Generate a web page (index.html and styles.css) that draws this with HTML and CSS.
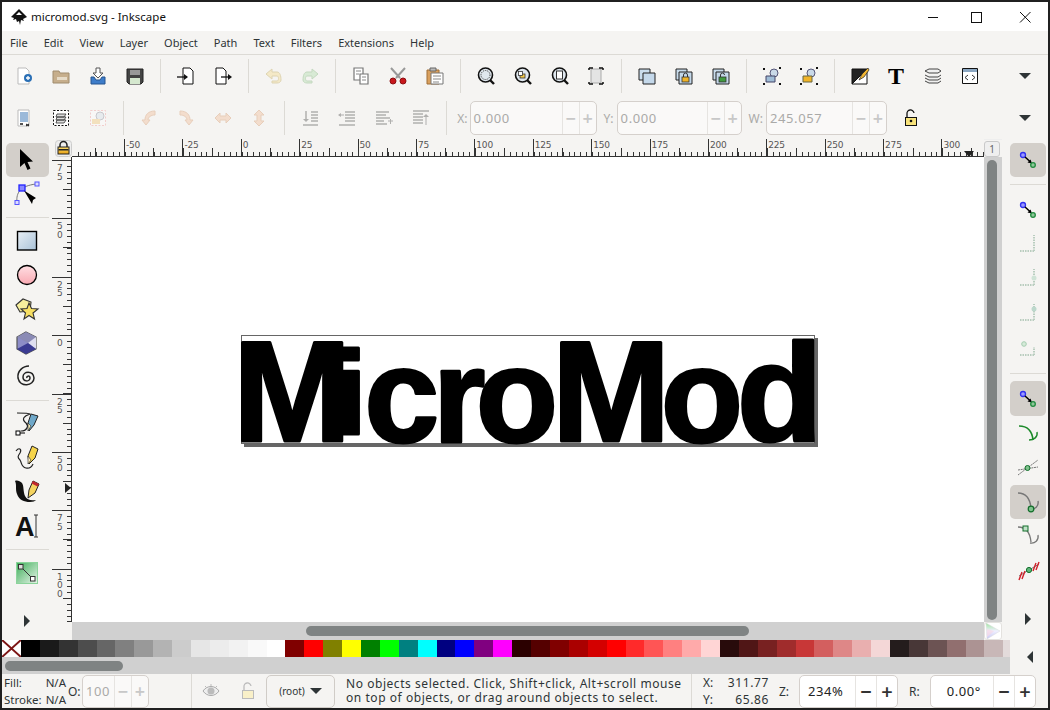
FILE: index.html
```html
<!DOCTYPE html>
<html>
<head>
  <title>micromod.svg - Inkscape</title>
  <link rel="stylesheet" href="styles.css">
</head>
<body>
<svg class="defs" width="0" height="0">
  <defs>
    <linearGradient id="gBlue" x1="0" y1="0" x2="1" y2="1"><stop offset="0" stop-color="#e8eff5"/><stop offset="1" stop-color="#a9c2d8"/></linearGradient>
    <linearGradient id="gPink" x1="0" y1="0" x2="0" y2="1"><stop offset="0" stop-color="#ffdfe3"/><stop offset="1" stop-color="#f9a9b2"/></linearGradient>
    <linearGradient id="gGreen" x1="0" y1="0" x2="1" y2="1"><stop offset="0" stop-color="#3fae5a"/><stop offset="1" stop-color="#e8f5ea"/></linearGradient>
    <linearGradient id="gGold" x1="0" y1="0" x2="0" y2="1"><stop offset="0" stop-color="#ffe070"/><stop offset="1" stop-color="#e8a010"/></linearGradient>
    <linearGradient id="gWheel" x1="0" y1="0" x2="0" y2="1"><stop offset="0" stop-color="#9fe59f"/><stop offset=".5" stop-color="#f0f0ff"/><stop offset="1" stop-color="#c8c8f5"/></linearGradient>
    <symbol id="mag" viewBox="0 0 20 20"><circle cx="9.500" cy="9" r="7" fill="#dfe7ee" stroke="#111" stroke-width="1.600"/><path d="M14 14l4 4" stroke="#111" stroke-width="2.400"/></symbol>
    <symbol id="nodeSnap" viewBox="0 0 26 26"><circle cx="8" cy="8" r="2.500" fill="#9a9aff" stroke="#3030f0" stroke-width="1.300"/><path d="M10 10l5 4.500" stroke="#000" stroke-width="1.500"/><path d="M17 16.500l-4.500-1 3-3z" fill="#000"/><circle cx="18" cy="18" r="2.300" fill="#8fc79a" stroke="#1e8a3c" stroke-width="1.300"/></symbol>
    <symbol id="cornerSnap" viewBox="0 0 26 26"><path d="M5 20h14M19 20V4" stroke="#b9cdbf" stroke-width="2" stroke-dasharray="1.500 1"/></symbol>
  </defs>
</svg>

<div class="window">
  <header class="titlebar">
    <svg class="app-logo" width="18" height="18" viewBox="0 0 18 18"><path d="M9 1L1 9l3 1-1 2 3-1 1 3 2-1 1 4 1-5 3 1-1-2 4-2z" fill="#111"/><path d="M6 7l3-3 3 3z" fill="#fff"/></svg>
    <span class="title-text">micromod.svg - Inkscape</span>
    <div class="win-btns">
      <svg width="46" height="29" viewBox="0 0 46 29"><path d="M18 15.500h10" stroke="#111"/></svg>
      <svg width="46" height="29" viewBox="0 0 46 29"><rect x="15.500" y="10.500" width="10" height="10" fill="none" stroke="#111"/></svg>
      <svg width="46" height="29" viewBox="0 0 46 29"><path d="M18 10l10.500 10.500M28.500 10L18 20.500" stroke="#111" fill="none"/></svg>
    </div>
  </header>

  <nav class="menubar">
    <span>File</span><span>Edit</span><span>View</span><span>Layer</span><span>Object</span><span>Path</span><span>Text</span><span>Filters</span><span>Extensions</span><span>Help</span>
  </nav>

  <div class="toolbar cmdbar">
    <button class="tb"><svg viewBox="0 0 20 20"><path d="M4 2h8l3 3v13H4z" fill="#fff" stroke="#bbb"/><circle cx="14" cy="12" r="4" fill="#2a6fb5"/><path d="M14 10v4M12 12h4" stroke="#fff" stroke-width="1.300"/></svg></button>
    <button class="tb"><svg viewBox="0 0 20 20"><path d="M2 5h6l1 2h9v10H2z" fill="#c6ae8c" stroke="#a08c6e"/><path d="M6 11h10v3H6z" fill="#e6dbc8"/></svg></button>
    <button class="tb"><svg viewBox="0 0 20 20"><path d="M8 2h4v5h3l-5 5-5-5h3z" fill="#fff" stroke="#555"/><path d="M3 11v7h14v-7h-3l-2 3H8l-2-3z" fill="#3d7cc9" stroke="#27558f"/></svg></button>
    <button class="tb"><svg viewBox="0 0 20 20"><path d="M2 3h16v13l-2 2H4l-2-2z" fill="#444" stroke="#222"/><path d="M5 4h10v5H5z" fill="#999"/><path d="M5 12h10v6H5z" fill="#d5e8cf"/></svg></button>
    <i class="sep"></i>
    <button class="tb"><svg viewBox="0 0 20 20"><path d="M7 2h7l3 3v13H7z" fill="#fff" stroke="#111"/><path d="M1 11h10" stroke="#111" stroke-width="1.300"/><path d="M12 11l-4-3v6z" fill="#111"/></svg></button>
    <button class="tb"><svg viewBox="0 0 20 20"><path d="M3 2h7l3 3v13H3z" fill="#fff" stroke="#111"/><path d="M8 11h9" stroke="#111" stroke-width="1.300"/><path d="M19 11l-4-3v6z" fill="#111"/></svg></button>
    <i class="sep"></i>
    <button class="tb off"><svg viewBox="0 0 20 20"><path d="M17 14c0 2-2 3-4 3H8v-2h5c2 0 2-5 0-5H8v3L2 8l6-5v3h5c3 0 4 4 4 8z" fill="#f3d67a" stroke="#b59a3d"/></svg></button>
    <button class="tb off"><svg viewBox="0 0 20 20"><path d="M3 14c0 2 2 3 4 3h5v-2H7c-2 0-2-5 0-5h5v3l6-5-6-5v3H7c-3 0-4 4-4 8z" fill="#a5d8a0" stroke="#6aa864"/></svg></button>
    <i class="sep"></i>
    <button class="tb"><svg viewBox="0 0 20 20"><path d="M3 2h9v12H3z" fill="#fff" stroke="#777" stroke-width="1.200"/><path d="M9 8h8v10H9z" fill="#fff" stroke="#777" stroke-width="1.200"/><path d="M5 5h5M5 8h3M11 11h4M11 14h4" stroke="#888"/></svg></button>
    <button class="tb"><svg viewBox="0 0 20 20"><path d="M3 2l9 10M17 2L8 12" stroke="#999" stroke-width="2"/><circle cx="5" cy="15" r="3" fill="#c8171c" stroke="#8d0f12"/><circle cx="15" cy="15" r="3" fill="#c8171c" stroke="#8d0f12"/></svg></button>
    <button class="tb"><svg viewBox="0 0 20 20"><path d="M2 4h12v14H2z" fill="#d9a05e" stroke="#a06f36"/><path d="M6 7h12v11H6z" fill="#fff" stroke="#777"/><path d="M5 2h6v3H5z" fill="#bbb" stroke="#666"/><path d="M8 10h8M8 13h8M8 16h6" stroke="#888"/></svg></button>
    <i class="sep"></i>
    <button class="tb"><svg viewBox="0 0 20 20"><use href="#mag"/><circle cx="9.500" cy="9" r="4.500" fill="none" stroke="#333" stroke-dasharray="1 1"/></svg></button>
    <button class="tb"><svg viewBox="0 0 20 20"><use href="#mag"/><rect x="7" y="8" width="5" height="4" fill="#f3c94a" stroke="#333" stroke-width=".800"/><rect x="5.500" y="5.500" width="4" height="4" fill="#fff" stroke="#333" stroke-width=".800"/></svg></button>
    <button class="tb"><svg viewBox="0 0 20 20"><use href="#mag"/><rect x="6.500" y="5" width="6" height="8" fill="#fff" stroke="#333"/></svg></button>
    <button class="tb"><svg viewBox="0 0 20 20"><path d="M5 3h10v14H5z" fill="#e4e4e4" stroke="#aaa"/><path d="M3 2h4M3 2v2M13 2h4M17 2v2M3 18h4M3 18v-2M13 18h4M17 18v-2" stroke="#111" stroke-width="1.500"/></svg></button>
    <i class="sep"></i>
    <button class="tb"><svg viewBox="0 0 20 20"><path d="M2 3h11v11H2z" fill="#c9dcec" stroke="#222"/><path d="M6 7h12v11H6z" fill="#c4d8ea" stroke="#222"/></svg></button>
    <button class="tb"><svg viewBox="0 0 20 20"><path d="M2 3h11v11H2z" fill="#c9dcec" stroke="#222"/><path d="M5 6h13v12H5z" fill="#c4d8ea" stroke="#222"/><rect x="8" y="11" width="7" height="5" fill="#f0b429" stroke="#333" stroke-width=".800"/><path d="M9.500 11V9a2 2 0 0 1 4 0v2" fill="none" stroke="#333"/></svg></button>
    <button class="tb"><svg viewBox="0 0 20 20"><path d="M2 3h11v11H2z" fill="#c9dcec" stroke="#222"/><path d="M5 6h13v12H5z" fill="#c4d8ea" stroke="#222"/><rect x="8" y="11" width="7" height="5" fill="#3f9a3f" stroke="#333" stroke-width=".800"/><path d="M9.500 11V9a2 2 0 0 1 4 0" fill="none" stroke="#333"/></svg></button>
    <i class="sep"></i>
    <button class="tb"><svg viewBox="0 0 20 20"><circle cx="12" cy="7" r="4" fill="#c9d9e8" stroke="#557"/><path d="M4 10h9v6H4z" fill="#9fbcd6" stroke="#446"/><path d="M1 2h2v2H1zM17 1h2v2h-2zM1 17h2v2H1zM17 17h2v2h-2z" fill="#111"/></svg></button>
    <button class="tb"><svg viewBox="0 0 20 20"><circle cx="12" cy="7" r="4" fill="#c9d9e8" stroke="#557"/><path d="M4 10h9v6H4z" fill="#f0b429" stroke="#664"/><path d="M1 2h2v2H1zM17 1h2v2h-2zM1 17h2v2H1zM17 17h2v2h-2z" fill="#111"/></svg></button>
    <i class="sep"></i>
    <button class="tb"><svg viewBox="0 0 20 20"><path d="M2 3h15L2 18z" fill="#222" stroke="#111"/><path d="M17 3v15H2z" fill="#fff" stroke="#111"/><path d="M18 2l-6 6-3 6 5-3 5-7z" fill="#f2b632" stroke="#222" stroke-width=".700"/></svg></button>
    <button class="tb"><svg class="open-svg" viewBox="0 0 20 20"><text class="serif-t" x="10" y="18">T</text></svg></button>
    <button class="tb"><svg viewBox="0 0 20 20"><path d="M2 5l4-2h9l3 2-3 2H6zM2 9l4 2h9l3-2M2 12l4 2h9l3-2M2 15l4 2h9l3-2" fill="#f0f0f0" stroke="#444"/></svg></button>
    <button class="tb"><svg viewBox="0 0 20 20"><path d="M2.500 2.500h15v15h-15z" fill="#fff" stroke="#111"/><path d="M3 3h14v3H3z" fill="#8aa6c1"/><path d="M8 9l-3 2.500L8 14M12 9l3 2.500L12 14" stroke="#333" fill="none"/></svg></button>
    <button class="more"><i class="tri-down"></i></button>
  </div>

  <div class="toolbar ctrlbar">
    <button class="tb"><svg viewBox="0 0 20 20"><path d="M4 2h11v16H4z" fill="#fff" stroke="#bbb"/><path d="M6 4h8v10H6z" fill="#9bb9d9"/><path d="M6 15h3v2H6z" fill="#555"/><path d="M12 16l3 2M15 16l-3 2" stroke="#111"/></svg></button>
    <button class="tb"><svg viewBox="0 0 20 20"><path d="M2.500 2.500h15v15h-15z" fill="#fff" stroke="#111" stroke-dasharray="2 1.500"/><path d="M6 6h9l-2 3H5zM6 9h9l-2 3H5zM6 12h9l-2 3H5z" fill="#ddd" stroke="#333" stroke-width=".800"/></svg></button>
    <button class="tb off"><svg viewBox="0 0 20 20"><path d="M2.500 2.500h15v15h-15z" fill="#fff" stroke="#e88" stroke-dasharray="2 1.500"/><circle cx="12" cy="8" r="4" fill="#cfdde8" stroke="#778"/><path d="M4 11h8v5H4z" fill="#f0c060"/></svg></button>
    <i class="sep"></i>
    <button class="tb off"><svg viewBox="0 0 20 20"><path d="M16 3C9 3 6 7 6 12H3l4 5 4-5H9c0-3 3-5 7-5z" fill="#f0b48a" stroke="#d08a58"/></svg></button>
    <button class="tb off"><svg viewBox="0 0 20 20"><path d="M4 3c7 0 10 4 10 9h3l-4 5-4-5h2c0-3-3-5-7-5z" fill="#f0b48a" stroke="#d08a58"/></svg></button>
    <button class="tb off"><svg viewBox="0 0 20 20"><path d="M2 10l5-5v3h6V5l5 5-5 5v-3H7v3z" fill="#f0b48a" stroke="#d08a58"/></svg></button>
    <button class="tb off"><svg viewBox="0 0 20 20"><path d="M10 2l5 5h-3v6h3l-5 5-5-5h3V7H5z" fill="#f0b48a" stroke="#d08a58"/></svg></button>
    <i class="sep"></i>
    <button class="tb off"><svg viewBox="0 0 20 20"><path d="M11 4h7M11 7h7M11 10h7M11 13h7M3 17h15" stroke="#333" stroke-width="1.500"/><path d="M6 3v9" stroke="#333" stroke-width="1.500"/><path d="M3 11h6l-3 3z" fill="#333"/></svg></button>
    <button class="tb off"><svg viewBox="0 0 20 20"><path d="M8 4h10M8 7h10M8 10h10M8 13h10M2 17h16" stroke="#333" stroke-width="1.500"/><path d="M2 7h5" stroke="#333"/><path d="M1 7l3-2v4z" fill="#333"/></svg></button>
    <button class="tb off"><svg viewBox="0 0 20 20"><path d="M2 4h13M2 7h10M2 10h14M2 13h8M2 16h11" stroke="#333" stroke-width="1.500"/><path d="M14 13h5M16.500 11v5" stroke="#333"/></svg></button>
    <button class="tb off"><svg viewBox="0 0 20 20"><path d="M2 3h16M2 6h10M2 9h10M2 12h10M2 15h10" stroke="#333" stroke-width="1.500"/><path d="M15 17V8" stroke="#333"/><path d="M15 6l-3 3h6z" fill="#333"/></svg></button>
    <i class="sep"></i>
    <label class="flabel off-text">X:</label>
    <div class="spin off-text xy"><span class="val">0.000</span><b>−</b><b>+</b></div>
    <label class="flabel off-text gap-y">Y:</label>
    <div class="spin off-text xy-y"><span class="val">0.000</span><b>−</b><b>+</b></div>
    <label class="flabel off-text gap-w">W:</label>
    <div class="spin off-text wd"><span class="val">245.057</span><b>−</b><b>+</b></div>
    <svg class="lock-open" width="16" height="20" viewBox="0 0 16 20"><rect x="2.500" y="9.500" width="11" height="8" fill="#f7e27a" stroke="#111"/><path d="M4 9V6a3.500 3.500 0 0 1 7 -1" fill="none" stroke="#111" stroke-width="1.300"/><circle cx="8" cy="13" r="1.300" fill="#111"/></svg>
    <button class="more"><i class="tri-down"></i></button>
  </div>

  <div class="workspace">
    <aside class="toolbox">
      <button class="tool active"><svg viewBox="0 0 26 26"><path d="M6 2v18l4.500-4 3 7 3-1.500-3-6.500 5.500-.5z" fill="#000"/></svg></button>
      <button class="tool"><svg viewBox="0 0 26 26"><path d="M3 21C2 12 6 5 22 3" fill="none" stroke="#777"/><rect x="1" y="19.500" width="4" height="4" fill="#ddf" stroke="#55f"/><rect x="21" y="1" width="4" height="4" fill="#ddf" stroke="#55f"/><rect x="5" y="4" width="6" height="6" fill="#88f" stroke="#22f" stroke-width="1.300"/><path d="M10 9.500L22 17l-3 2-1 4z" fill="#000"/></svg></button>
      <i class="tool-sep"></i>
      <button class="tool"><svg viewBox="0 0 26 26"><rect x="3.500" y="3.500" width="19" height="18.500" fill="url(#gBlue)" stroke="#000" stroke-width="1.400"/></svg></button>
      <button class="tool"><svg viewBox="0 0 26 26"><circle cx="13" cy="13" r="9.500" fill="url(#gPink)" stroke="#000" stroke-width="1.300"/></svg></button>
      <button class="tool"><svg viewBox="0 0 26 26"><path d="M2 9l7-6 8 3-1 9-10 1z" fill="#f7ef9c" stroke="#333" stroke-width="1.100"/><path d="M15 7l2.500 5.500 6.500.5-5 4 1.500 6-5.500-3.500-5 3.500 1.500-6-4.500-4 6-.5z" fill="#f7df62" stroke="#333" stroke-width="1.100"/></svg></button>
      <button class="tool"><svg viewBox="0 0 26 26"><path d="M12 2l10 5v12l-10 5-9-5V7z" fill="#8d8dc7" stroke="#555" stroke-width="1.200"/><path d="M12 2l10 5-8 6-11-6z" fill="#8b8bb5"/><path d="M14 13l8-6v12z" fill="#dfdff0"/><path d="M3 19l11-6 8 6-10 5z" fill="#3b3b92"/></svg></button>
      <button class="tool"><svg viewBox="0 0 26 26"><path d="M13 14c-1-2 3-3 3 0 0 4-7 4-7-1 0-6 10-7 11 1 0 8-14 10-16 0C3 7 9 2 15 2" fill="none" stroke="#222" stroke-width="1.500"/></svg></button>
      <i class="tool-sep"></i>
      <button class="tool"><svg viewBox="0 0 26 26"><path d="M3 2c6 0 12 0 13 1-6 2-9 5-4 9 3 3 1 8-5 8" fill="none" stroke="#222" stroke-width="1.200"/><rect x="2" y="20" width="4" height="4" fill="#fff" stroke="#000"/><path d="M6 22h5" stroke="#000"/><path d="M17 3l7 2-4 9-5 6-1-8z" fill="#6fa8c9" stroke="#222"/><path d="M14 12l3 3-3 5z" fill="#eee7b8" stroke="#222" stroke-width=".600"/></svg></button>
      <button class="tool"><svg viewBox="0 0 26 26"><path d="M2 6c3-4 6-2 4 2-2 3-3 4 0 7 2 3 1 7 6 8s6-2 7-4" fill="none" stroke="#222" stroke-width="1.200"/><path d="M18 1l6 3-3 9-6 6-1-8z" fill="#f6d44a" stroke="#222"/><path d="M14 11l3 4-3 4z" fill="#f7e9c2" stroke="#222" stroke-width=".600"/></svg></button>
      <button class="tool"><svg viewBox="0 0 26 26"><path d="M1 2c2 4 0 8 2 13 2 6 7 8 13 8 3 0 5-1 6-2-5 1-9 0-11-4-2-5-1-10-3-13-2-2-5-3-7-2z" fill="#111"/><path d="M19 2l6 3-4 9-7 5 1-8z" fill="#f4d360" stroke="#222"/><path d="M19 2l6 3-1.500 2.500-6-3z" fill="#c0272d"/></svg></button>
      <button class="tool"><svg class="open-svg" viewBox="0 0 26 26"><text class="tool-a" x="1" y="23">A</text><path d="M20 2h4M22 2v22M20 24h4" stroke="#333" fill="none"/></svg></button>
      <i class="tool-sep"></i>
      <button class="tool"><svg viewBox="0 0 26 26"><rect x="2.500" y="2.500" width="21" height="21" fill="url(#gGreen)" stroke="#8bd49b"/><path d="M7 7l12 12" stroke="#333"/><rect x="4.500" y="4.500" width="4.500" height="4.500" fill="#ddd" stroke="#333"/><rect x="16.500" y="16.500" width="4.500" height="4.500" fill="#fff" stroke="#333"/></svg></button>
      <button class="overflow-btn"><i class="tri-right"></i></button>
    </aside>

    <div class="stage">
      <div class="corner-lock">
        <svg width="17" height="17" viewBox="0 0 17 17"><rect x=".500" y=".500" width="16" height="16" rx="3" fill="#eee" stroke="#ccc"/><rect x="3" y="7" width="11" height="7" fill="url(#gGold)" stroke="#222"/><path d="M5 7V5a3.500 3.500 0 0 1 7 0v2" fill="none" stroke="#222" stroke-width="1.500"/><rect x="3.500" y="9" width="10" height="1.500" fill="#222"/></svg>
      </div>
      <div class="ruler-h">
        <span class="mark">-50</span><span class="mark">-25</span><span class="mark">0</span><span class="mark">25</span><span class="mark">50</span><span class="mark">75</span><span class="mark">100</span><span class="mark">125</span><span class="mark">150</span><span class="mark">175</span><span class="mark">200</span><span class="mark">225</span><span class="mark">250</span><span class="mark">275</span><span class="mark">300</span>
        <i class="pointer-h"></i>
      </div>
      <div class="zoom-corner"><span>1</span></div>

      <div class="ruler-v">
        <span class="vmark">7<br>5</span><span class="vmark">5<br>0</span><span class="vmark">2<br>5</span><span class="vmark">0</span><span class="vmark">2<br>5</span><span class="vmark">5<br>0</span><span class="vmark">7<br>5</span><span class="vmark">1<br>0<br>0</span>
        <i class="pointer-v"></i>
      </div>
      <main class="canvas">
        <div class="page"></div>
        <svg class="artwork" width="912" height="465" viewBox="72 157 912 465">
          <text class="logo" y="441"><tspan x="233">M</tspan><tspan class="logo-i" x="334" y="433.500">i</tspan><tspan class="logo-low" x="364.500" y="441.500">c</tspan><tspan class="logo-low" x="433">r</tspan><tspan class="logo-low" x="476">o</tspan><tspan x="552" y="441">M</tspan><tspan class="logo-low" x="661" y="441.500">o</tspan><tspan class="logo-d" x="737" y="441">d</tspan></text>
        </svg>
      </main>
      <div class="vscroll"><i></i></div>

      <div class="stage-foot"></div>
      <div class="hscroll"><i></i></div>
      <div class="wheel-corner"><svg width="16" height="16" viewBox="0 0 16 16"><path d="M1 0l14 8-13 8z" fill="url(#gWheel)" stroke="#ddd" stroke-width=".500"/><path d="M2 6l7 2-7 6z" fill="#f7d8e6" opacity=".7"/></svg></div>
    </div>

    <aside class="snapbar">
      <button class="snap active"><svg viewBox="0 0 26 26"><use href="#nodeSnap"/></svg></button>
      <i class="snap-sep"></i>
      <button class="snap"><svg viewBox="0 0 26 26"><use href="#nodeSnap"/></svg></button>
      <button class="snap"><svg viewBox="0 0 26 26"><use href="#cornerSnap"/></svg></button>
      <button class="snap"><svg viewBox="0 0 26 26"><use href="#cornerSnap"/><circle cx="19" cy="13" r="2.500" fill="#cfe3d6"/></svg></button>
      <button class="snap"><svg viewBox="0 0 26 26"><use href="#cornerSnap"/><circle cx="19" cy="9" r="2.500" fill="#bcd8cc"/></svg></button>
      <button class="snap"><svg viewBox="0 0 26 26"><path d="M5 21h14M19 21V13" stroke="#b9cdbf" stroke-width="2" stroke-dasharray="1.500 1"/><circle cx="9" cy="10" r="2.300" fill="#d5ead9" stroke="#a5cdb0"/></svg></button>
      <i class="snap-sep last"></i>
      <button class="snap active"><svg viewBox="0 0 26 26"><use href="#nodeSnap"/></svg></button>
      <button class="snap"><svg viewBox="0 0 26 26"><path d="M4 6c7 0 13 4 14 14" fill="none" stroke="#1c8a2a" stroke-width="1.600"/><path d="M22 12c1 5-3 8-8 8" fill="none" stroke="#1c8a2a" stroke-width="1.400"/></svg></button>
      <button class="snap"><svg viewBox="0 0 26 26"><path d="M3 21L23 6M3 16l20-3" stroke="#777" fill="none" stroke-dasharray="2 .700"/><circle cx="12.500" cy="14" r="2.500" fill="#7fc28d" stroke="#126e2a"/></svg></button>
      <button class="snap active"><svg viewBox="0 0 26 26"><path d="M3 4c7 0 12 5 13 15" fill="none" stroke="#777" stroke-width="1.400"/><path d="M23 12c1 5-3 9-8 8" fill="none" stroke="#777" stroke-width="1.400"/><circle cx="16" cy="20" r="2.800" fill="#7fc28d" stroke="#126e2a" stroke-width="1.200"/></svg></button>
      <button class="snap"><svg viewBox="0 0 26 26"><path d="M3 4c7 0 12 5 13 15" fill="none" stroke="#777" stroke-width="1.300"/><path d="M23 12c1 5-3 9-8 8" fill="none" stroke="#777" stroke-width="1.300"/><rect x="8" y="3" width="5" height="5" fill="#bfe0c7" stroke="#126e2a"/></svg></button>
      <button class="snap"><svg viewBox="0 0 26 26"><path d="M4 19l20-12" stroke="#777"/><path d="M4 23l3-8M7 22l3-8M18 14l3-8M21 13l3-8" stroke="#d0202a" stroke-width="1.400"/><circle cx="14" cy="13" r="2.600" fill="#5fb57a" stroke="#126e2a"/></svg></button>
      <button class="overflow-btn"><i class="tri-right"></i></button>
    </aside>
  </div>

  <div class="bottom">
    <div class="palette-col">
      <div class="palette">
        <svg class="no-paint" width="19" height="17" viewBox="0 0 19 17"><rect width="19" height="17" fill="#fff"/><path d="M0 0l19 17M19 0L0 17" stroke="#7d1616" stroke-width="2"/></svg>
        <i style="background:#000000"></i><i style="background:#1a1a1a"></i><i style="background:#333333"></i><i style="background:#4d4d4d"></i><i style="background:#666666"></i><i style="background:#808080"></i><i style="background:#999999"></i><i style="background:#b3b3b3"></i><i style="background:#cccccc"></i><i style="background:#e6e6e6"></i><i style="background:#ececec"></i><i style="background:#f2f2f2"></i><i style="background:#f9f9f9"></i><i style="background:#ffffff"></i><i style="background:#800000"></i><i style="background:#ff0000"></i><i style="background:#808000"></i><i style="background:#ffff00"></i><i style="background:#008000"></i><i style="background:#00ff00"></i><i style="background:#008080"></i><i style="background:#00ffff"></i><i style="background:#000080"></i><i style="background:#0000ff"></i><i style="background:#800080"></i><i style="background:#ff00ff"></i><i style="background:#2b0000"></i><i style="background:#550000"></i><i style="background:#800000"></i><i style="background:#aa0000"></i><i style="background:#d40000"></i><i style="background:#ff0000"></i><i style="background:#ff2a2a"></i><i style="background:#ff5555"></i><i style="background:#ff8080"></i><i style="background:#ffaaaa"></i><i style="background:#ffd5d5"></i><i style="background:#280b0b"></i><i style="background:#501616"></i><i style="background:#782121"></i><i style="background:#a02c2c"></i><i style="background:#c83737"></i><i style="background:#d35f5f"></i><i style="background:#de8787"></i><i style="background:#e9afaf"></i><i style="background:#f4d7d7"></i><i style="background:#241c1c"></i><i style="background:#483737"></i><i style="background:#6c5353"></i><i style="background:#916f6f"></i><i style="background:#ac9393"></i><i style="background:#c8b7b7"></i><i style="background:#e3dbdb"></i>
      </div>
      <div class="palette-scroll"><i></i></div>
    </div>
    <div class="palette-side"><i class="tri-left"></i></div>
  </div>

  <footer class="statusbar">
    <div class="fillstroke">
      <div class="fs-row"><span>Fill:</span><span>N/A</span></div>
      <div class="fs-row"><span>Stroke:</span><span>N/A</span></div>
    </div>
    <label class="flabel op-label">O:</label>
    <div class="spin off-text opacity"><span class="val">100</span><b>−</b><b>+</b></div>
    <i class="sep status-sep"></i>
    <svg class="st-eye" width="20" height="16" viewBox="0 0 20 16"><path d="M2 8c4-6 12-6 16 0-4 6-12 6-16 0z" fill="#eee" stroke="#aaa"/><circle cx="10" cy="8" r="3.500" fill="#bbb"/><path d="M4 3l2 2M10 1v2M16 3l-2 2" stroke="#bbb"/></svg>
    <svg class="st-lock" width="16" height="20" viewBox="0 0 16 20"><rect x="2.500" y="9.500" width="11" height="8" fill="#f9f0c8" stroke="#bbb"/><path d="M4 9V6a3.500 3.500 0 0 1 7 -1" fill="none" stroke="#bbb" stroke-width="1.300"/></svg>
    <div class="layer-combo"><span>(root)</span><i class="tri-down"></i></div>
    <div class="message">No objects selected. Click, Shift+click, Alt+scroll mouse<br>on top of objects, or drag around objects to select.</div>
    <i class="sep status-sep"></i>
    <div class="coords">
      <div><span>X:</span><span class="num">311.77</span></div>
      <div><span>Y:</span><span class="num">65.86</span></div>
    </div>
    <label class="flabel dark z-label">Z:</label>
    <div class="spin live zoomval"><span class="val">234%</span><b>−</b><b>+</b></div>
    <label class="flabel dark r-label">R:</label>
    <div class="spin live rot"><span class="val">0.00°</span><b>−</b><b>+</b></div>
  </footer>
</div>
</body>
</html>
```

FILE: styles.css
```css
* {
    box-sizing: border-box;
}
html, body {
    margin: 0;
    padding: 0;
    height: 710px;
    overflow: hidden;
    background: #202020;
}
body {
    font-family: "Noto Sans", sans-serif;
    font-size: 12px;
    color: #2e3436;
}
i {
    display: block;
}
button {
    background: none;
    border: 0;
    padding: 0;
    display: flex;
    align-items: center;
    justify-content: center;
}
.defs {
    position: absolute;
}
.open-svg {
    overflow: visible;
}
.window {
    margin: 2px 2px 0 2px;
    width: 1046px;
    height: 706px;
    background: #f5f4f2;
    display: flex;
    flex-direction: column;
}

/* title + menu */
.titlebar {
    height: 29px;
    background: #fff;
    display: flex;
    align-items: center;
    padding-left: 8px;
    flex: none;
}
.title-text {
    margin-left: 3px;
    font-size: 11.500px;
    color: #111;
}
.win-btns {
    margin-left: auto;
    display: flex;
}
.win-btns svg {
    display: block;
}
.menubar {
    height: 24px;
    flex: none;
    display: flex;
    gap: 16.100px;
    align-items: center;
    padding-left: 8px;
    font-size: 11px;
    border-bottom: 1px solid #dcdad5;
}

/* top toolbars */
.toolbar {
    display: flex;
    align-items: center;
    flex: none;
    padding-left: 4px;
}
.cmdbar {
    height: 45px;
    padding-bottom: 3px;
}
.ctrlbar {
    height: 39px;
    padding-bottom: 3px;
}
.tb {
    width: 36.800px;
    height: 34px;
    flex: none;
}
.tb svg {
    width: 20px;
    height: 20px;
}
.off svg {
    opacity: .35;
}
.sep {
    width: 1px;
    height: 34px;
    background: #dcdad5;
    margin: 0 6.600px;
    flex: none;
}
.serif-t {
    font-family: "Liberation Serif", serif;
    font-weight: bold;
    font-size: 24px;
    text-anchor: middle;
    fill: #000;
}
.more {
    margin-left: auto;
    width: 46px;
    height: 34px;
    flex: none;
}
.tri-down {
    width: 0;
    height: 0;
    border-left: 6px solid transparent;
    border-right: 6px solid transparent;
    border-top: 6px solid #2e3436;
}
.tri-right {
    width: 0;
    height: 0;
    border-top: 6px solid transparent;
    border-bottom: 6px solid transparent;
    border-left: 6px solid #2e3436;
}
.tri-left {
    width: 0;
    height: 0;
    border-top: 6px solid transparent;
    border-bottom: 6px solid transparent;
    border-right: 6px solid #2e3436;
}

/* spin inputs */
.spin {
    height: 34px;
    display: flex;
    border: 1px solid #d5d0cc;
    border-radius: 5px;
    flex: none;
    background: #faf9f8;
    font-size: 13px;
    letter-spacing: .6px;
}
.spin .val {
    flex: 1;
    display: flex;
    align-items: center;
    padding-left: 3px;
}
.spin b {
    width: 17px;
    border-left: 1px solid #e6e4e1;
    display: flex;
    align-items: center;
    justify-content: center;
    font-weight: 600;
    font-size: 18px;
    color: #c8c8c8;
    letter-spacing: 0;
}
.off-text {
    color: #aaaaa8;
}
.flabel {
    flex: none;
    font-size: 12px;
}
.xy {
    width: 127px;
    margin-left: 2px;
}
.xy-y {
    width: 125px;
    margin-left: 3px;
}
.wd {
    width: 121px;
    margin-left: 3px;
}
.flabel.off-text {
    margin-left: 4px;
}
.flabel.gap-y, .flabel.gap-w {
    margin-left: 7px;
}
.lock-open {
    margin-left: 16px;
    flex: none;
}

/* workspace */
.workspace {
    height: 501px;
    flex: none;
    display: flex;
}
.toolbox {
    width: 50px;
    flex: none;
    display: flex;
    flex-direction: column;
    align-items: center;
    padding-top: 4px;
}
.tool {
    width: 43px;
    height: 34px;
    flex: none;
    border-radius: 5px;
}
.tool svg {
    width: 26px;
    height: 26px;
}
.tool.active, .snap.active {
    background: #d3cfca;
}
.tool-sep {
    width: 43px;
    height: 1px;
    background: #dcdad5;
    margin: 6px 0;
    flex: none;
    align-self: center;
}
.toolbox .overflow-btn {
    margin-top: 19px;
}
.overflow-btn {
    width: 34px;
    height: 24px;
    flex: none;
}
.tool-a {
    font-family: "Liberation Sans", sans-serif;
    font-weight: bold;
    font-size: 27px;
    fill: #111;
}

.stage {
    width: 950px;
    flex: none;
    display: grid;
    grid-template-columns: 20px 912px 18px;
    grid-template-rows: 18px 465px 18px;
}
.corner-lock {
    display: flex;
    align-items: flex-start;
    justify-content: flex-start;
    padding: 1px 0 0 3px;
}
.ruler-h {
    display: flex;
    overflow: hidden;
    position: relative;
    padding-left: 52px;
    border-bottom: 1px solid #333;
    background-image:
        repeating-linear-gradient(90deg, #333 0 1px, transparent 1px 29.200px),
        repeating-linear-gradient(90deg, #333 0 1px, transparent 1px 5.840px);
    background-size: 100% 8px, 100% 4px;
    background-position: 23px bottom, 5.600px bottom;
    background-repeat: no-repeat;
}
.mark {
    width: 58.400px;
    flex: none;
    border-left: 1px solid #333;
    font-size: 9px;
    line-height: 9px;
    padding: 2px 0 0 1px;
    color: #555;
    font-family: "DejaVu Sans", sans-serif;
    letter-spacing: -.2px;
}
.pointer-h {
    position: absolute;
    left: 892px;
    bottom: -1px;
    width: 0;
    height: 0;
    border-left: 5px solid transparent;
    border-right: 5px solid transparent;
    border-top: 6px solid #222;
}
.zoom-corner {
    padding: 1px 0 0 0;
    border-top: 1px solid #eee;
    background: #f5f4f2;
}
.zoom-corner span {
    display: flex;
    align-items: center;
    justify-content: center;
    width: 16px;
    height: 16px;
    border: 1px solid #c9c9c9;
    border-radius: 3px;
    background: #efefef;
    font-size: 10px;
    color: #666;
}
.ruler-v {
    position: relative;
    overflow: hidden;
    display: flex;
    flex-direction: column;
    padding-top: 3px;
    border-right: 1px solid #333;
    background-image:
        repeating-linear-gradient(180deg, #333 0 1px, transparent 1px 29.200px),
        repeating-linear-gradient(180deg, #333 0 1px, transparent 1px 5.840px);
    background-size: 8px 100%, 4px 100%;
    background-position: right 32px, right 2.800px;
    background-repeat: no-repeat;
}
.vmark {
    height: 58.400px;
    flex: none;
    border-top: 1px solid #333;
    font-size: 9px;
    line-height: 8.500px;
    padding: 3px 0 0 5px;
    color: #555;
    font-family: "DejaVu Sans", sans-serif;
}
.pointer-v {
    position: absolute;
    top: 326px;
    right: 0;
    width: 0;
    height: 0;
    border-top: 5px solid transparent;
    border-bottom: 5px solid transparent;
    border-left: 6px solid #222;
}
.canvas {
    background: #fff;
    position: relative;
    overflow: hidden;
}
.page {
    position: absolute;
    left: 169px;
    top: 178px;
    width: 574px;
    height: 109px;
    border: 1px solid #666;
    box-shadow: 3px 3px 0 #666;
    background: #fff;
}
.artwork {
    position: absolute;
    left: 0;
    top: 0;
}
.logo {
    font-family: "Liberation Sans", sans-serif;
    font-weight: bold;
    font-size: 142px;
    fill: #000;
    stroke: #000;
    stroke-width: 3;
    stroke-linejoin: round;
}
.logo-i {
    font-size: 118px;
}
.logo-low {
    font-size: 134px;
}
.logo-d {
    font-size: 140px;
}
.vscroll {
    background: #d0d0d0;
    padding: 3px 3px 2px 3px;
}
.vscroll i {
    height: 100%;
    width: 10px;
    margin-left: 0;
    background: #7f8383;
    border-radius: 5px;
}
.hscroll {
    background: #d0d0d0;
    padding: 4px 0 4px 234px;
}
.hscroll i {
    width: 443px;
    height: 10px;
    background: #7f8383;
    border-radius: 5px;
}
.wheel-corner {
    background: #fff;
    border: 1px solid #e4e2df;
    border-radius: 3px;
    display: flex;
    align-items: center;
    justify-content: center;
}
.snapbar {
    width: 46px;
    flex: none;
    display: flex;
    flex-direction: column;
    align-items: center;
    padding: 4px 0 0 6px;
}
.snap {
    width: 36px;
    height: 34.400px;
    flex: none;
    border-radius: 5px;
}
.snap svg {
    width: 26px;
    height: 26px;
}
.snap-sep {
    width: 36px;
    height: 1px;
    background: #dcdad5;
    margin: 7px 0 7px;
    flex: none;
}
.snap-sep.last {
    margin: 9px 0 7px;
}
.snapbar .overflow-btn {
    margin-top: 19px;
}

/* palette */
.bottom {
    height: 34px;
    flex: none;
    display: flex;
}
.palette-col {
    width: 1008px;
    flex: none;
    background: #d0d0d0;
    overflow: hidden;
}
.palette {
    height: 17px;
    display: flex;
}
.no-paint {
    flex: none;
    display: block;
}
.palette i {
    width: 18.900px;
    height: 17px;
    flex: none;
}
.palette-scroll {
    height: 17px;
    padding: 4px 0 3px 3px;
}
.palette-scroll i {
    width: 118px;
    height: 10px;
    background: #7f8383;
    border-radius: 5px;
}
.palette-side {
    flex: 1;
    display: flex;
    align-items: center;
    justify-content: center;
    padding-left: 2px;
}

/* status bar */
.statusbar {
    height: 34px;
    flex: none;
    display: flex;
    align-items: center;
    font-size: 12px;
}
.fillstroke {
    width: 64px;
    flex: none;
    padding-left: 2px;
    font-size: 11.500px;
    line-height: 17px;
}
.fs-row {
    display: flex;
    justify-content: space-between;
}
.statusbar .sep {
    height: 34px;
}
.op-label {
    margin-left: 2px;
    width: 14px;
}
.opacity {
    width: 67px;
    height: 33px;
}
.status-sep {
    margin: 0;
}
.opacity + .status-sep {
    margin-left: 42px;
}
.st-eye {
    margin-left: 9px;
    flex: none;
}
.st-lock {
    margin-left: 19px;
    flex: none;
}
.layer-combo {
    margin-left: 10px;
    width: 69px;
    height: 33px;
    flex: none;
    border: 1px solid #d0ccc7;
    border-radius: 5px;
    display: flex;
    align-items: center;
    justify-content: center;
    gap: 5px;
    font-size: 10px;
}
.message {
    margin-left: 11px;
    width: 345px;
    flex: none;
    line-height: 14px;
    font-size: 12px;
    letter-spacing: .55px;
}
.coords {
    width: 77px;
    flex: none;
    padding-left: 11px;
    line-height: 17px;
}
.coords div {
    display: flex;
    justify-content: space-between;
}
.num {
    letter-spacing: .6px;
}
.dark {
    color: #2e3436;
}
.z-label {
    margin-left: 10px;
    width: 20px;
}
.r-label {
    margin-left: 11px;
    width: 21px;
}
.live {
    background: #fff;
    color: #222;
    height: 33px;
}
.live b {
    width: 21px;
    color: #333;
    font-size: 20px;
}
.zoomval {
    width: 99px;
}
.zoomval .val {
    padding-left: 8px;
}
.rot {
    width: 106px;
}
.rot .val {
    justify-content: flex-end;
    padding-right: 12px;
}
```
